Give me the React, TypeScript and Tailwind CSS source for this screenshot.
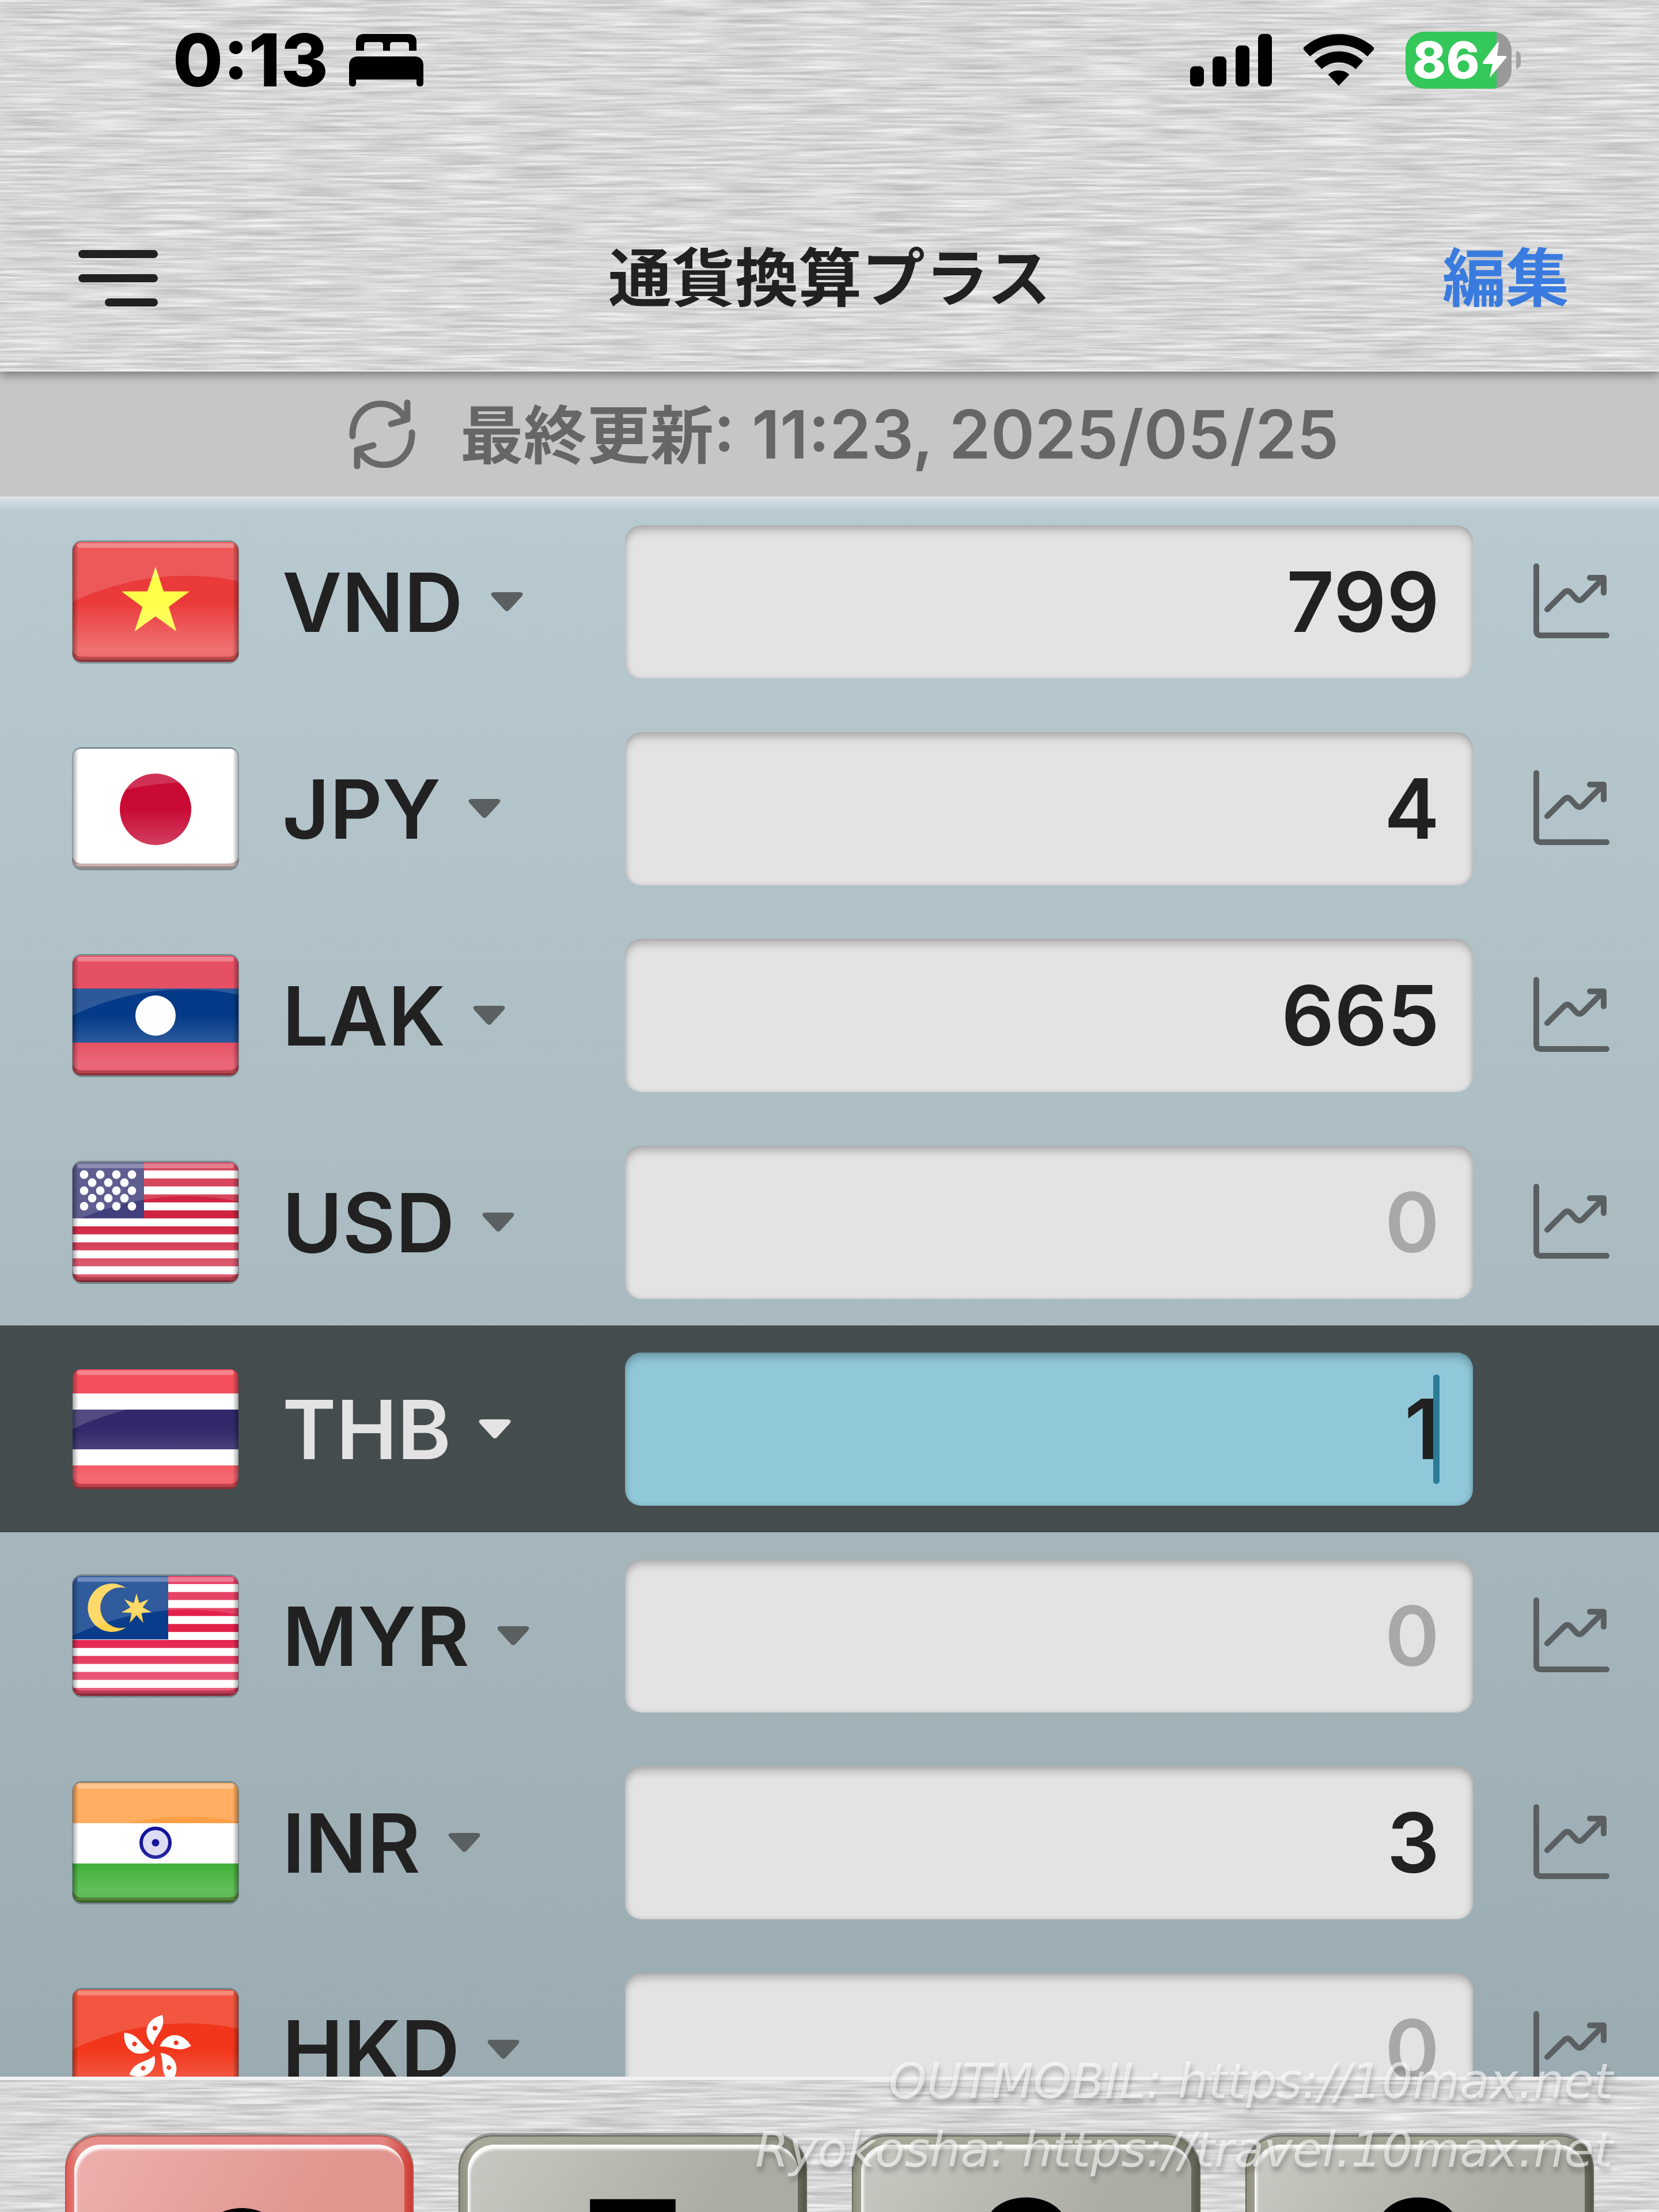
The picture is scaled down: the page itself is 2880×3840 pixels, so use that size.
import React, { useState } from 'react';

type Currency = {
    code: string;
    amount: string;
    flag: React.ReactNode;
};

// Points of a regular star, first point straight up
const starPoints = (cx: number, cy: number, outer: number, inner: number, tips: number) =>
    Array.from({ length: tips * 2 }, (_, i) => {
        const r = i % 2 === 0 ? outer : inner;
        const a = (Math.PI * i) / tips - Math.PI / 2;
        return `${(cx + r * Math.cos(a)).toFixed(1)},${(cy + r * Math.sin(a)).toFixed(1)}`;
    }).join(' ');

const Stripes: React.FC<{ color: string }> = ({ color }) => (
    <>
        <rect width="288" height="208" fill="#fff" />
        {[0, 2, 4, 6, 8, 10, 12, 14].map((n) => (
            <rect key={n} y={n * 13.87} width="288" height="13.87" fill={color} />
        ))}
    </>
);

const VietnamFlag = (
    <>
        <rect width="288" height="208" fill="#ea3a3a" />
        <polygon points={starPoints(144, 105, 62, 24, 5)} fill="#ffff4a" />
    </>
);

const JapanFlag = (
    <>
        <rect width="288" height="208" fill="#fff" />
        <circle cx="144" cy="105" r="62" fill="#c80a35" />
    </>
);

const LaosFlag = (
    <>
        <rect width="288" height="208" fill="#e22f47" />
        <rect y="57" width="288" height="94" fill="#053a88" />
        <circle cx="144" cy="104" r="35" fill="#fff" />
    </>
);

const UsaFlag = (
    <>
        <Stripes color="#cf2440" />
        <rect width="124" height="97" fill="#41407c" />
        {[21, 49, 76].map((y) => [20, 48, 76, 103].map((x) => <circle key={`${x}-${y}`} cx={x} cy={y} r="7.4" fill="#fff" />))}
        {[35, 62].map((y) => [34, 62, 90].map((x) => <circle key={`${x}-${y}`} cx={x} cy={y} r="7.4" fill="#fff" />))}
    </>
);

const ThailandFlag = (
    <>
        <rect width="288" height="208" fill="#f22f3d" />
        <rect y="42" width="288" height="125" fill="#fff" />
        <rect y="70" width="288" height="69" fill="#31296a" />
    </>
);

const MalaysiaFlag = (
    <>
        <Stripes color="#e3204a" />
        <rect width="166" height="110" fill="#093c8b" />
        <path d="M93 21A42 42 0 1 0 93 89A35.3 35.3 0 1 1 93 21Z" fill="#ffd24d" />
        <polygon points={starPoints(111, 57, 27, 11, 7)} fill="#ffd24d" />
    </>
);

const IndiaFlag = (
    <>
        <rect width="288" height="208" fill="#fff" />
        <rect width="288" height="70" fill="#ff9f45" />
        <rect y="140" width="288" height="68" fill="#27a51c" />
        <circle cx="144" cy="104" r="25" fill="#dcdcf2" stroke="#15159a" strokeWidth="6" />
        <circle cx="144" cy="104" r="6.5" fill="#15159a" />
    </>
);

const HongKongFlag = (
    <>
        <rect width="288" height="208" fill="#f1361c" />
        {[0, 72, 144, 216, 288].map((deg) => (
            <g key={deg} transform={`translate(144 105) rotate(${deg})`}>
                <path d="M-4 -9C-24 -26 -18 -54 12 -61C18 -36 2 -30 -4 -9Z" fill="#fff" />
                <circle cx="-1" cy="-38" r="4" fill="#f1361c" />
            </g>
        ))}
    </>
);

const currencies: Currency[] = [
    { code: 'VND', amount: '799', flag: VietnamFlag },
    { code: 'JPY', amount: '4', flag: JapanFlag },
    { code: 'LAK', amount: '665', flag: LaosFlag },
    { code: 'USD', amount: '0', flag: UsaFlag },
    { code: 'THB', amount: '1', flag: ThailandFlag },
    { code: 'MYR', amount: '0', flag: MalaysiaFlag },
    { code: 'INR', amount: '3', flag: IndiaFlag },
    { code: 'HKD', amount: '0', flag: HongKongFlag },
];

const keys = ['C', '7', '8', '9'];

// Glossy frame shared by all flags
const Flag: React.FC<{ id: string; children: React.ReactNode }> = ({ id, children }) => (
    <svg viewBox="-2 -4 292 216" className="w-[292px] h-[216px] -mx-[2px] shrink-0" aria-hidden="true">
        <defs>
            <clipPath id={`clip-${id}`}>
                <rect width="288" height="208" rx="15" />
            </clipPath>
            <linearGradient id={`shine-${id}`} x1="0" y1="0" x2="0" y2="1">
                <stop offset="0.5" stopColor="#fff" stopOpacity="0" />
                <stop offset="0.9" stopColor="#fff" stopOpacity="0.28" />
                <stop offset="1" stopColor="#fff" stopOpacity="0.22" />
            </linearGradient>
            <linearGradient id={`side-${id}`}>
                <stop offset="0" stopColor="#000" stopOpacity="0.35" />
                <stop offset="0.035" stopColor="#000" stopOpacity="0" />
                <stop offset="0.965" stopColor="#000" stopOpacity="0" />
                <stop offset="1" stopColor="#000" stopOpacity="0.35" />
            </linearGradient>
        </defs>
        <rect x="-1" y="-3" width="290" height="214" rx="17" fill="#3c5058" fillOpacity="0.45" />
        <g clipPath={`url(#clip-${id})`}>
            {children}
            <path d="M0 0H288V68C210 50 100 55 0 104Z" fill="#fff" fillOpacity="0.16" />
            <rect width="288" height="208" fill={`url(#shine-${id})`} />
            <rect width="288" height="208" fill={`url(#side-${id})`} />
            <rect x="8" y="2" width="272" height="8" rx="4" fill="#fff" fillOpacity="0.3" />
            <path d="M0 188Q4 199 16 199H272Q284 199 288 188V208H0Z" fill="#400" fillOpacity="0.3" />
            <rect y="204" width="288" height="4" fill="#000" fillOpacity="0.25" />
        </g>
    </svg>
);

const BrushedMetal: React.FC<{ id: string; seed: number }> = ({ id, seed }) => (
    <svg className="absolute inset-0 -z-10 w-full h-full" aria-hidden="true">
        <filter id={id} x="0" y="0" width="100%" height="100%" colorInterpolationFilters="sRGB">
            <feTurbulence type="fractalNoise" baseFrequency="0.008 0.2" numOctaves="3" seed={seed} />
            <feColorMatrix values="0.32 0 0 0 0.685  0.32 0 0 0 0.685  0.32 0 0 0 0.685  0 0 0 0 1" />
        </filter>
        <rect width="100%" height="100%" filter={`url(#${id})`} />
    </svg>
);

const BedIcon = () => (
    <svg viewBox="0 0 129 91" className="w-[129px] h-[91px]" aria-hidden="true">
        <path d="M12 29V14Q12 0 26 0H103Q117 0 117 14V29H104V19Q104 14 99 14H76Q71 14 71 19V29H59V19Q59 14 54 14H31Q26 14 26 19V29Z" />
        <path d="M0 55Q0 39 16 39H113Q129 39 129 55V85Q129 91 123 91Q117 91 117 85V79H12V85Q12 91 6 91Q0 91 0 85Z" />
    </svg>
);

const SignalIcon = () => (
    <svg viewBox="0 0 142 91" className="w-[142px] h-[91px]" aria-hidden="true">
        <rect x="0" y="56" width="24" height="35" rx="8" />
        <rect x="39" y="39" width="24" height="52" rx="8" />
        <rect x="79" y="20" width="24" height="71" rx="8" />
        <rect x="118" y="0" width="24" height="91" rx="8" />
    </svg>
);

const WifiIcon = () => (
    <svg viewBox="0 0 122 91" className="w-[122px] h-[91px]" fill="none" stroke="#000" strokeWidth="19" aria-hidden="true">
        <path d="M4.7 32A82.5 82.5 0 0 1 117.3 32" />
        <path d="M25 54A52.5 52.5 0 0 1 97 54" />
        <path d="M61 90L42.500 70.500A27 27 0 0 1 79.500 70.500Z" fill="#000" stroke="none" />
    </svg>
);

const Battery = () => (
    <div className="flex items-center gap-2">
        <div className="relative flex items-center w-[184px] h-[99px] pl-3 rounded-[32px] bg-[linear-gradient(90deg,#34c759_86%,#999_86%)]">
            <span className="text-[88px] leading-none font-extrabold text-white">86</span>
            <svg viewBox="0 0 43 62" className="absolute right-2 w-[43px] h-[62px]" aria-hidden="true">
                <path d="M27 0L1 35Q0 38 3 38H18L13 62L42 27Q43 24 40 24H26L29 1Z" fill="#fff" />
            </svg>
        </div>
        <span className="w-2 h-[30px] rounded-r-full bg-[#a3a3a3]" />
    </div>
);

const RefreshIcon = () => (
    <svg viewBox="0 0 115 122" className="w-[115px] h-[122px]" fill="none" stroke="#696969" strokeWidth="11" strokeLinecap="round" strokeLinejoin="round" aria-hidden="true">
        <path d="M6 64C5 30 27 8 55 8C73 8 88 17 98 34" />
        <path d="M101 6V35L73 43" />
        <path d="M109 58C110 92 88 114 60 114C42 114 27 105 17 88" />
        <path d="M14 116V88L42 80" />
    </svg>
);

const ChartIcon = () => (
    <svg viewBox="0 0 132 130" className="w-[132px] h-[130px]" fill="none" stroke="#5a6062" strokeWidth="10" strokeLinecap="round" strokeLinejoin="round" aria-hidden="true">
        <path d="M5 5V117Q5 125 13 125H127" />
        <path d="M24 80L54 50Q59 46 64 50L74 61Q80 67 86 61L121 26" />
        <path d="M98 25H122V51" />
    </svg>
);

const CurrencyRow: React.FC<{ item: Currency; active: boolean; onSelect: () => void }> = ({ item, active, onSelect }) => {
    const [value, setValue] = useState(item.amount);

    return (
        <li className={`flex items-center h-[359px] shrink-0 ${active ? 'bg-[#454c4d]' : ''}`}>
            <div className="flex items-center w-[1085px] pl-[126px] shrink-0">
                <Flag id={item.code}>{item.flag}</Flag>
                <button type="button" className={`flex items-center gap-12 ml-[76px] text-[142px] leading-none font-semibold ${active ? 'text-[#e3e3e3]' : 'text-[#212121]'}`}>
                    {item.code}
                    <svg viewBox="0 0 56 34" className={`w-14 h-[34px] ${active ? 'fill-[#e3e3e3]' : 'fill-[#5a6062]'}`} aria-hidden="true">
                        <path d="M5 0H51Q58 1 54 7L32 31Q28 35 24 31L2 7Q-2 1 5 0Z" />
                    </svg>
                </button>
            </div>
            <div className="relative flex-1">
                <input
                    type="text"
                    aria-label={item.code}
                    value={value}
                    onChange={(e) => setValue(e.target.value)}
                    onFocus={onSelect}
                    className={`block w-full h-[266px] px-[58px] rounded-[28px] text-right text-[144px] leading-none font-semibold outline-none shadow-[inset_0_10px_14px_rgba(0,0,0,0.2),inset_0_0_8px_rgba(0,0,0,0.15)] ${active ? 'bg-[#90c8d9]' : 'bg-[#e3e3e3]'} ${value === '0' ? 'text-[#a8a8a8]' : 'text-[#212121]'}`}
                />
                {active && <span className="absolute right-[58px] top-[38px] w-[11px] h-[190px] rounded-full bg-[#2a7c97]" />}
            </div>
            <div className="flex items-center w-[323px] pl-[105px] shrink-0">
                {!active && (
                    <button type="button" aria-label={`${item.code} chart`} className="mb-1">
                        <ChartIcon />
                    </button>
                )}
            </div>
        </li>
    );
};

const Key: React.FC<{ label: string }> = ({ label }) => {
    const clear = label === 'C';
    return (
        <button
            type="button"
            className={`flex h-[480px] p-[14px] rounded-[60px] border-2 shadow-[0_-4px_1px_rgba(0,0,0,0.3)] ${clear ? 'border-[#b8564f] bg-[linear-gradient(90deg,#e05a54,#e58f8b_4%,#e28380_92%,#cf3a30)]' : 'border-[#66675a] bg-[linear-gradient(90deg,#8e8f7e,#a9a99a_4%,#9f9f8f_92%,#55564a)]'}`}
        >
            <span
                className={`flex-1 h-full rounded-[46px] leading-none text-black shadow-[inset_4px_8px_4px_rgba(255,255,255,0.95)] ${clear ? 'pt-[78px] text-[260px] font-medium bg-[linear-gradient(120deg,#ecb0ae,#e1958e_60%)]' : 'pt-[54px] text-[300px] font-semibold bg-[linear-gradient(120deg,#c8c9c2,#acaca4_60%)]'}`}
            >
                {label}
            </span>
        </button>
    );
};

export default function App() {
    const [selected, setSelected] = useState('THB');

    return (
        <div className="relative flex flex-col h-screen overflow-hidden font-['Inter','Noto_Sans_CJK_JP',sans-serif]">
            <header className="relative z-10 isolate shrink-0 border-b-2 border-[#eee] shadow-[0_6px_16px_rgba(0,0,0,0.4)]">
                <BrushedMetal id="metal-top" seed={4} />
                {/* Status bar */}
                <div className="flex items-center justify-between h-[208px] pl-[300px] pr-[240px]">
                    <div className="flex items-center gap-[36px]">
                        <span className="text-[126px] leading-none font-extrabold text-black">0:13</span>
                        <BedIcon />
                    </div>
                    <div className="flex items-center gap-[55px]">
                        <SignalIcon />
                        <WifiIcon />
                        <Battery />
                    </div>
                </div>
                {/* Navigation bar */}
                <nav className="grid grid-cols-[1fr_auto_1fr] items-center h-[320px] mt-[115px] px-[136px] text-[110px] leading-none font-bold">
                    <button type="button" aria-label="メニュー" className="flex flex-col items-end gap-7 w-[138px]">
                        <span className="w-full h-[14px] rounded-full bg-[#212121]" />
                        <span className="w-full h-[14px] rounded-full bg-[#212121]" />
                        <span className="w-[92px] h-[14px] rounded-full bg-[#212121]" />
                    </button>
                    <h1 className="text-[#212121]">通貨換算プラス</h1>
                    <button type="button" className="justify-self-end mr-5 text-[#3a7be0]">編集</button>
                </nav>
            </header>

            <button type="button" className="flex items-center justify-center gap-[78px] h-[217px] pl-[50px] shrink-0 bg-[#c6c6c6] text-[#666] text-[110px] leading-none font-semibold">
                <RefreshIcon />
                <span>
                    最終更新<span className="text-[116px]">: 11:23, 2025/05/25</span>
                </span>
            </button>

            <ul className="flex flex-col flex-1 min-h-0 pt-[3px] overflow-hidden bg-[linear-gradient(#e2e4e6,#d3dfe3_5px,#b8c9d0_26px,#9babb2)]">
                {currencies.map((item) => (
                    <CurrencyRow key={item.code} item={item} active={item.code === selected} onSelect={() => setSelected(item.code)} />
                ))}
            </ul>

            {/* Keypad, scrolled partly out of view */}
            <footer className="relative isolate h-[235px] shrink-0 overflow-hidden border-t-[6px] border-[#f2f2f2]">
                <BrushedMetal id="metal-bottom" seed={9} />
                <div className="grid grid-cols-4 gap-[78px] px-[113px] pt-24">
                    {keys.map((label) => (
                        <Key key={label} label={label} />
                    ))}
                </div>
            </footer>

            {/* Watermark */}
            <div className="absolute right-20 bottom-12 z-20 flex flex-col items-end pointer-events-none font-['DejaVu_Sans',sans-serif] font-extralight italic text-[84px] leading-[119px] whitespace-nowrap text-white/60 [text-shadow:2px_8px_8px_rgba(0,0,0,0.25)]">
                <span>OUTMOBIL: https://10max.net</span>
                <span>Ryokosha: https://travel.10max.net</span>
            </div>
        </div>
    );
}
